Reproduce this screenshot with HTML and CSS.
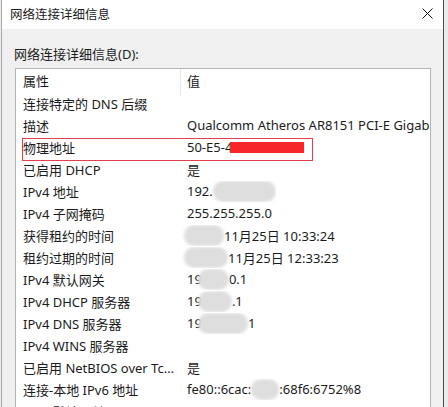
FILE: index.html
```html
<!DOCTYPE html>
<html lang="zh-CN">
<head>
    <meta charset="UTF-8">
    <meta name="viewport" content="width=device-width, initial-scale=1.0">
    <title>网络连接详细信息</title>
    <link rel="stylesheet" href="styles.css">
</head>
<body>
    <div class="window">
        <div class="titlebar">
            <span class="title">网络连接详细信息</span>
            <svg class="close" width="11" height="11" viewBox="0 0 11 11">
                <path d="M0.5 0.5 L10.5 10.5 M10.5 0.5 L0.5 10.5" stroke="#111" stroke-width="1" fill="none"/>
            </svg>
        </div>
        <div class="content">
            <div class="label">网络连接详细信息(D):</div>
            <div class="list">
                <div class="row head">
                    <div class="name">属性</div>
                    <div class="value">值</div>
                </div>
                <div class="row">
                    <div class="name">连接特定的 DNS 后缀</div>
                    <div class="value"></div>
                </div>
                <div class="row">
                    <div class="name">描述</div>
                    <div class="value">Qualcomm Atheros AR8151 PCI-E Gigabit Ethernet Controller (NDIS 6.30)</div>
                </div>
                <div class="row marked">
                    <div class="name">物理地址</div>
                    <div class="value">50-E5-4<span class="redact"></span></div>
                </div>
                <div class="row">
                    <div class="name">已启用 DHCP</div>
                    <div class="value">是</div>
                </div>
                <div class="row">
                    <div class="name">IPv4 地址</div>
                    <div class="value">192.<span class="blur" style="width:63px"></span></div>
                </div>
                <div class="row">
                    <div class="name">IPv4 子网掩码</div>
                    <div class="value">255.255.255.0</div>
                </div>
                <div class="row">
                    <div class="name">获得租约的时间</div>
                    <div class="value"><span class="blur lead" style="width:40px"></span>11月25日 10:33:24</div>
                </div>
                <div class="row">
                    <div class="name">租约过期的时间</div>
                    <div class="value"><span class="blur lead" style="width:44px"></span>11月25日 12:33:23</div>
                </div>
                <div class="row">
                    <div class="name">IPv4 默认网关</div>
                    <div class="value">19<span class="blur over" style="width:31px"></span>0.1</div>
                </div>
                <div class="row">
                    <div class="name">IPv4 DHCP 服务器</div>
                    <div class="value">19<span class="blur over" style="width:34px"></span>.1</div>
                </div>
                <div class="row">
                    <div class="name">IPv4 DNS 服务器</div>
                    <div class="value">19<span class="blur over" style="width:50px"></span>1</div>
                </div>
                <div class="row">
                    <div class="name">IPv4 WINS 服务器</div>
                    <div class="value"></div>
                </div>
                <div class="row">
                    <div class="name">已启用 NetBIOS over Tcpip</div>
                    <div class="value">是</div>
                </div>
                <div class="row">
                    <div class="name">连接-本地 IPv6 地址</div>
                    <div class="value">fe80::6cac:<span class="blur" style="width:28px"></span>:68f6:6752%8</div>
                </div>
                <div class="row">
                    <div class="name">IPv6 默认网关</div>
                    <div class="value"></div>
                </div>
            </div>
        </div>
    </div>
</body>
</html>
```

FILE: styles.css
```css
body {
    margin: 0;
    background: #ebebeb;
    font-family: "Noto Sans", "Noto Sans CJK SC", sans-serif;
    font-size: 13px;
    color: #1b1b1b;
    overflow: hidden;
}

.window {
    width: 441px;
    height: 407px;
    margin-left: 1px;
    border-left: 1px solid #a9a9a9;
    border-right: 1px solid #4d4d4d;
    background: #f0f0f0;
    display: flex;
    flex-direction: column;
}

.titlebar {
    height: 27px;
    background: #fff;
    display: flex;
    align-items: center;
    justify-content: space-between;
    padding: 0 10px 2px 8px;
}

.title {
    font-size: 12.5px;
}

.close {
    display: block;
}

.content {
    flex: 1;
    padding: 16px 0 0 12px;
    display: flex;
    flex-direction: column;
    overflow: hidden;
}

.label {
    line-height: 18px;
    height: 18px;
}

.list {
    margin-top: 5px;
    margin-left: 1px;
    width: 414px;
    flex: 1;
    background: #fff;
    border: 1px solid #b4b4b4;
    border-bottom: none;
    overflow: hidden;
}

.row {
    display: flex;
    height: 22px;
    box-sizing: border-box;
    padding-bottom: 4px;
    align-items: center;
    position: relative;
    white-space: nowrap;
}

.row.head {
    height: 25px;
    padding-bottom: 0;
}

.name {
    width: 158px;
    padding: 0 0 0 7px;
    overflow: hidden;
    text-overflow: ellipsis;
    flex: none;
}

.head .name {
    width: 157px;
    border-right: 1px solid #e6e6e6;
    height: 100%;
    display: flex;
    align-items: center;
    padding-bottom: 3px;
    box-sizing: content-box;
}

.head .value {
    padding-bottom: 3px;
}

.value {
    padding-left: 6px;
    display: flex;
    align-items: center;
    overflow: hidden;
}

.row.marked::before {
    content: "";
    position: absolute;
    left: 6px;
    top: 0;
    width: 289px;
    height: 21px;
    border: 1px solid #e2414b;
}

.redact {
    display: inline-block;
    width: 74px;
    height: 11px;
    margin-left: -2px;
    background: #f7262a;
}

.blur {
    display: inline-block;
    height: 21px;
    background: #dedede;
    border-radius: 10px;
    filter: blur(1.5px);
}

.blur.lead {
    margin-left: -3px;
}

.blur.over {
    margin-left: -4px;
    position: relative;
}
```
